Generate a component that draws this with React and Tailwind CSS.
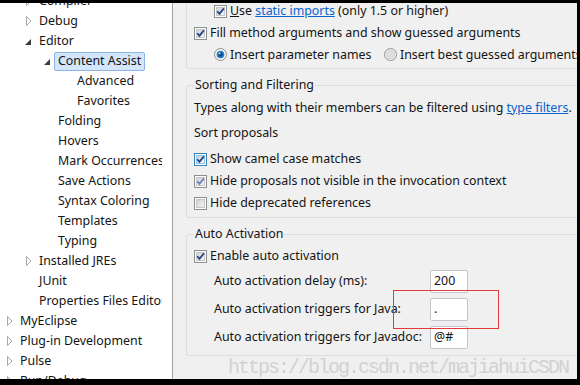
import React from 'react';

const treeItems = [
  { label: 'Compiler', level: 1, state: 'collapsed' },
  { label: 'Debug', level: 1, state: 'collapsed' },
  { label: 'Editor', level: 1, state: 'expanded' },
  { label: 'Content Assist', level: 2, state: 'expanded', selected: true },
  { label: 'Advanced', level: 3 },
  { label: 'Favorites', level: 3 },
  { label: 'Folding', level: 2 },
  { label: 'Hovers', level: 2 },
  { label: 'Mark Occurrences', level: 2 },
  { label: 'Save Actions', level: 2 },
  { label: 'Syntax Coloring', level: 2 },
  { label: 'Templates', level: 2 },
  { label: 'Typing', level: 2 },
  { label: 'Installed JREs', level: 1, state: 'collapsed' },
  { label: 'JUnit', level: 1 },
  { label: 'Properties Files Editor', level: 1 },
  { label: 'MyEclipse', level: 0, state: 'collapsed' },
  { label: 'Plug-in Development', level: 0, state: 'collapsed' },
  { label: 'Pulse', level: 0, state: 'collapsed' },
  { label: 'Run/Debug', level: 0, state: 'collapsed' },
];

const indent = ['pl-[6px]', 'pl-[25px]', 'pl-[44px]', 'pl-[63px]'];

const TreeArrow = ({ state }) => {
  if (state === 'expanded') {
    return (
      <svg width="6" height="6" viewBox="0 0 6 6" className="mt-[1px]">
        <polygon points="6,0 6,6 0,6" fill="#3c3c3c" />
      </svg>
    );
  }
  if (state === 'collapsed') {
    return (
      <svg width="6" height="10" viewBox="0 0 6 10" className="ml-[1px]">
        <polygon points="0.5,0.5 5,5 0.5,9.5" fill="#fff" stroke="#a6a6a6" />
      </svg>
    );
  }
  return null;
};

const CheckBox = ({ checked = true, hot = false, dim = false }) => (
  <svg width="13" height="13" viewBox="0 0 13 13" className="shrink-0">
    <defs>
      <linearGradient id="cbFill" x1="0" y1="0" x2="1" y2="1">
        <stop offset="0" stopColor="#cfcfcf" />
        <stop offset="1" stopColor="#f7f7f7" />
      </linearGradient>
    </defs>
    <rect x="0.5" y="0.5" width="12" height="12" fill="#fdfdfd" stroke={hot ? '#3c7fb1' : '#8e8f8f'} />
    <rect x="2.5" y="2.5" width="8" height="8" fill="url(#cbFill)" stroke={hot ? '#8cc6ee' : '#c4c6c8'} />
    {checked && (
      <path
        d="M3.3 6.3 L5.4 8.9 L9.9 3.4"
        fill="none"
        stroke={dim ? '#6f81b8' : '#27408e'}
        strokeWidth="1.8"
      />
    )}
  </svg>
);

const Radio = ({ selected }) => (
  <svg width="13" height="13" viewBox="0 0 13 13" className="shrink-0">
    <circle cx="6.5" cy="6.5" r="6" fill="#f3f3f3" stroke="#8e8f8f" />
    {selected ? (
      <>
        <circle cx="6.5" cy="6.5" r="3.8" fill="#2a7fc4" />
        <circle cx="6.5" cy="6.5" r="2.3" fill="#0b4a8c" />
        <circle cx="5.5" cy="5.4" r="1.1" fill="#9ad6ff" />
      </>
    ) : (
      <circle cx="6.5" cy="6.5" r="4.2" fill="#dedede" stroke="#cbcbcb" strokeWidth="0.8" />
    )}
  </svg>
);

const CheckRow = ({ children, className = '', ...box }) => (
  <div className={`flex h-[22px] items-center gap-[3px] ${className}`}>
    <CheckBox {...box} />
    <span>{children}</span>
  </div>
);

const Field = ({ value }) => (
  <div className="flex h-[23px] w-[38px] items-center rounded-[2px] border border-[#c2c5cb] bg-white pl-[3px]">
    {value}
  </div>
);

const App = () => {
  return (
    <div className="flex h-[385px] w-[580px] flex-col overflow-hidden bg-black font-['Noto_Sans','Open_Sans',sans-serif] text-[12.4px] text-[#141414]">
      <div className="h-[3px] shrink-0" />
      <div className="flex h-[376px] shrink-0">
        {/* preference tree */}
        <div className="w-[173px] shrink-0 overflow-hidden border-r border-[#a0a0a0] bg-white">
          <div className="-mt-[12px] w-[162px] overflow-hidden">
            {treeItems.map((item) => (
              <div key={item.label} className={`flex h-[20px] items-center whitespace-nowrap ${indent[item.level]}`}>
                <span className="flex w-[14px] shrink-0 items-center">
                  <TreeArrow state={item.state} />
                </span>
                {item.selected ? (
                  <span className="-ml-[4px] flex h-[19px] items-center rounded-[2px] border border-[#8db2e3] bg-[#d3e6fb] px-[3px]">
                    {item.label}
                  </span>
                ) : (
                  <span>{item.label}</span>
                )}
              </div>
            ))}
          </div>
        </div>

        {/* content assist page */}
        <div className="relative flex-1 overflow-hidden bg-[#f0f0f0]">
          <div className="-mt-[10px] ml-[13px] w-[440px] rounded-[3px] border border-[#d5dfe5] pb-[2px] pl-[7px] pt-[6px] whitespace-nowrap">
            <CheckRow className="pl-[20px]">
              <span className="underline">U</span>se{' '}
              <span className="text-[#0b63ce] underline">static imports</span> (only 1.5 or higher)
            </CheckRow>
            <CheckRow>Fill method arguments and show guessed arguments</CheckRow>
            <div className="flex h-[22px] items-center pl-[20px]">
              <div className="flex w-[170px] items-center gap-[3px]">
                <Radio selected />
                <span>Insert parameter names</span>
              </div>
              <div className="flex items-center gap-[3px]">
                <Radio />
                <span>Insert best guessed arguments</span>
              </div>
            </div>
          </div>

          <fieldset className="ml-[13px] mt-[7px] w-[440px] rounded-[3px] border border-[#d5dfe5] pb-[3px] pl-[7px] pt-[3px] whitespace-nowrap">
            <legend className="h-[18px] px-[1px] leading-[18px]">Sorting and Filtering</legend>
            <div className="flex h-[22px] items-center">
              <span>
                Types along with their members can be filtered using{' '}
                <span className="text-[#0b63ce] underline">type filters</span>.
              </span>
            </div>
            <div className="mt-[3px] flex h-[22px] items-center">Sort proposals</div>
            <div className="mt-[4px]">
              <CheckRow hot>Show camel case matches</CheckRow>
              <CheckRow dim>Hide proposals not visible in the invocation context</CheckRow>
              <CheckRow checked={false}>Hide deprecated references</CheckRow>
            </div>
          </fieldset>

          <fieldset className="ml-[13px] mt-[7px] w-[440px] rounded-[3px] border border-[#d5dfe5] pb-[4px] pl-[7px] pt-[2px] whitespace-nowrap">
            <legend className="h-[18px] px-[1px] leading-[18px]">Auto Activation</legend>
            <CheckRow>Enable auto activation</CheckRow>
            <div className="grid grid-cols-[216px_38px] pl-[20px]">
              <div className="flex h-[28px] items-center">Auto activation delay (ms):</div>
              <div className="flex h-[28px] items-center"><Field value="200" /></div>
              <div className="flex h-[28px] items-center">Auto activation triggers for Java:</div>
              <div className="flex h-[28px] items-center"><Field value="." /></div>
              <div className="flex h-[28px] items-center">Auto activation triggers for Javadoc:</div>
              <div className="flex h-[28px] items-center"><Field value="@#" /></div>
            </div>
          </fieldset>

          {/* annotation box */}
          <div className="absolute left-[220px] top-[287px] h-[39px] w-[106px] border border-[#e23b3b]" />

          {/* watermark */}
          <div className="pointer-events-none absolute left-[55px] top-[355px] whitespace-nowrap font-['Liberation_Mono',monospace] text-[20px] leading-[20px] tracking-[-2px] text-[#d2d2d2]">
            https://blog.csdn.net/majiahuiCSDN
          </div>
        </div>
        <div className="w-[3px] shrink-0" />
      </div>
    </div>
  );
};

export default App;
